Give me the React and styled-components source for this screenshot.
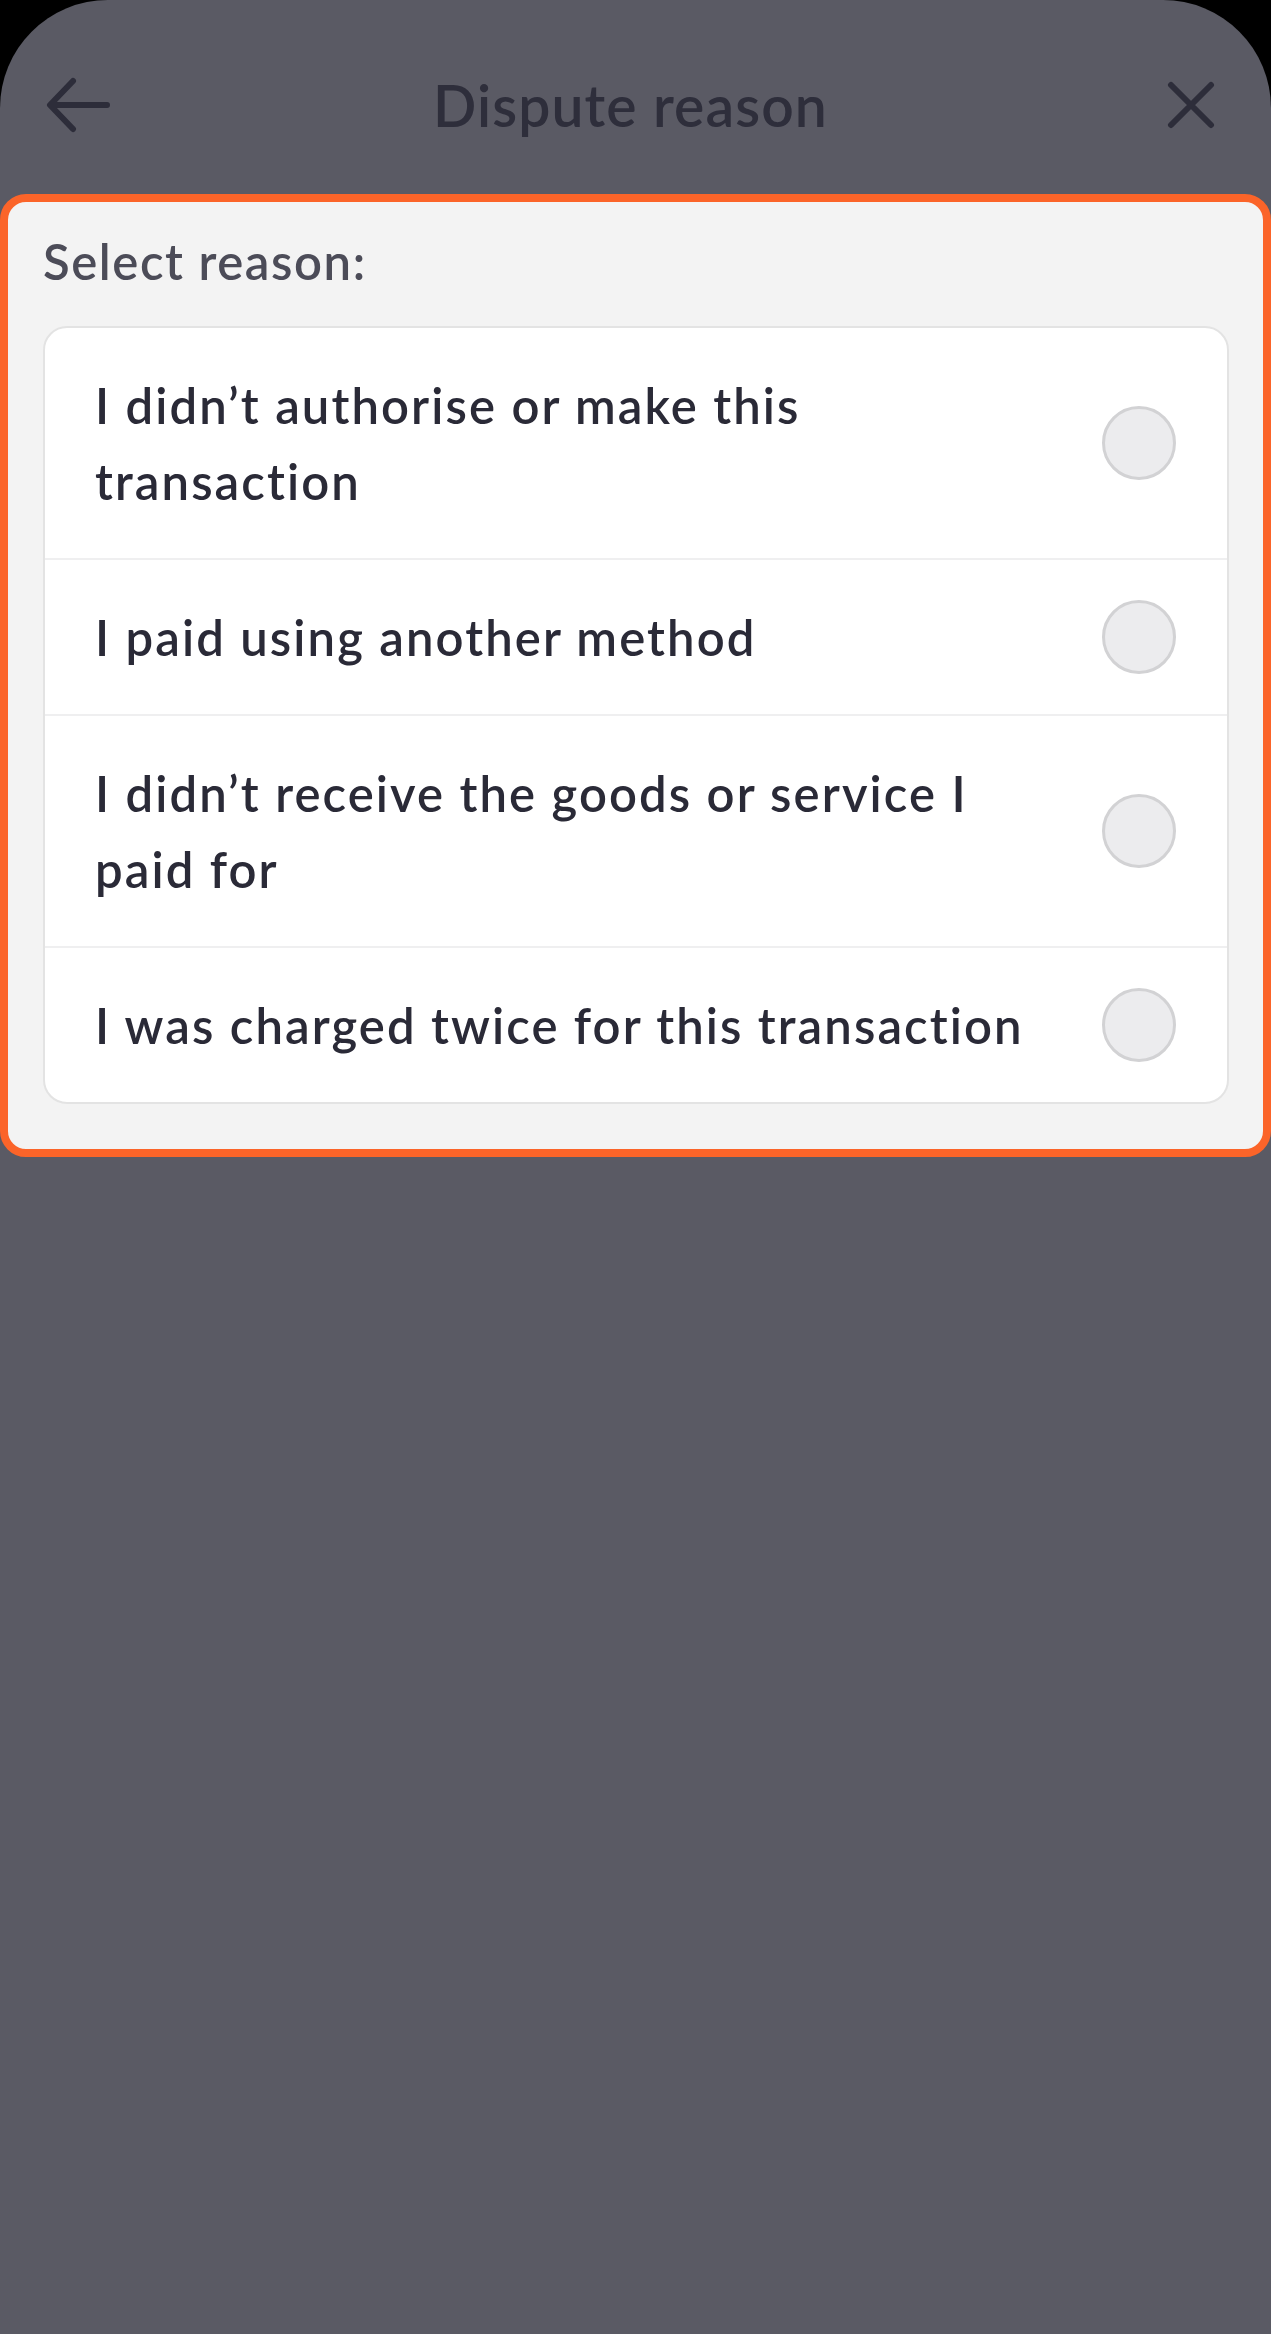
import React from "react";
import styled, { createGlobalStyle } from "styled-components";

const Global = createGlobalStyle`
  html, body {
    margin: 0;
    padding: 0;
    background: #000000;
  }
  body {
    font-family: Lato, "Noto Sans", "Liberation Sans", sans-serif;
    -webkit-font-smoothing: antialiased;
  }
`;

const Screen = styled.div`
  min-height: 2334px;
  background: #5a5a64;
  border-radius: 108px 108px 0 0;
  display: flex;
  flex-direction: column;
`;

const Header = styled.header`
  height: 194px;
  box-sizing: border-box;
  padding: 16px 56px 0 46px;
  display: grid;
  grid-template-columns: 1fr auto 1fr;
  align-items: center;
`;

const IconButton = styled.button`
  background: none;
  border: 0;
  padding: 0;
  margin: 0;
  display: flex;
  align-items: center;
  justify-self: ${(p) => (p.$end ? "end" : "start")};
  color: #2d2d3a;
  cursor: pointer;
`;

const Title = styled.h1`
  margin: 0;
  font-size: 57px;
  font-weight: 600;
  color: #2e2e3b;
  letter-spacing: 1.1px;
  line-height: 1;
`;

const Card = styled.section`
  margin: 0;
  border: 8px solid #fb6429;
  border-radius: 26px;
  background: #f3f3f3;
  padding: 29px 34px 45px 35px;
  display: flex;
  flex-direction: column;
  gap: 35px;
`;

const Label = styled.div`
  font-size: 49px;
  line-height: 60px;
  font-weight: 600;
  color: #4c4c58;
  letter-spacing: 1.6px;
`;

const List = styled.div`
  background: #ffffff;
  border: 2px solid #e3e3e3;
  border-radius: 24px;
  overflow: hidden;
`;

const Row = styled.label`
  display: flex;
  align-items: center;
  padding: 39px 51px 39px 50px;
  border-top: ${(p) => (p.$first ? "0" : "2px solid #efeff0")};
  cursor: pointer;
`;

const RowText = styled.span`
  flex: 1;
  font-size: 49px;
  line-height: 76px;
  font-weight: 600;
  color: #2a2a37;
  letter-spacing: 2.1px;
`;

const Radio = styled.span`
  flex: none;
  width: 74px;
  height: 74px;
  box-sizing: border-box;
  margin-left: 54px;
  border-radius: 50%;
  background: #ececee;
  border: 3px solid #d2d2d4;
`;

const reasons = [
  "I didn\u2019t authorise or make this transaction",
  "I paid using another method",
  "I didn\u2019t receive the goods or service I paid for",
  "I was charged twice for this transaction",
];

const BackIcon = () => (
  <svg width="66" height="56" viewBox="0 0 66 56" fill="none">
    <path
      d="M61 28H5M27 4L4 28l23 24"
      stroke="currentColor"
      strokeWidth="6"
      strokeLinecap="round"
      strokeLinejoin="round"
    />
  </svg>
);

const CloseIcon = () => (
  <svg width="48" height="48" viewBox="0 0 48 48" fill="none">
    <path
      d="M4 4l40 40M44 4L4 44"
      stroke="currentColor"
      strokeWidth="6"
      strokeLinecap="round"
    />
  </svg>
);

export default function App() {
  return (
    <>
      <Global />
      <Screen>
        <Header>
          <IconButton aria-label="Back">
            <BackIcon />
          </IconButton>
          <Title>Dispute reason</Title>
          <IconButton $end aria-label="Close">
            <CloseIcon />
          </IconButton>
        </Header>
        <Card>
          <Label>Select reason:</Label>
          <List>
            {reasons.map((r, i) => (
              <Row key={r} $first={i === 0}>
                <RowText>{r}</RowText>
                <Radio />
              </Row>
            ))}
          </List>
        </Card>
      </Screen>
    </>
  );
}
